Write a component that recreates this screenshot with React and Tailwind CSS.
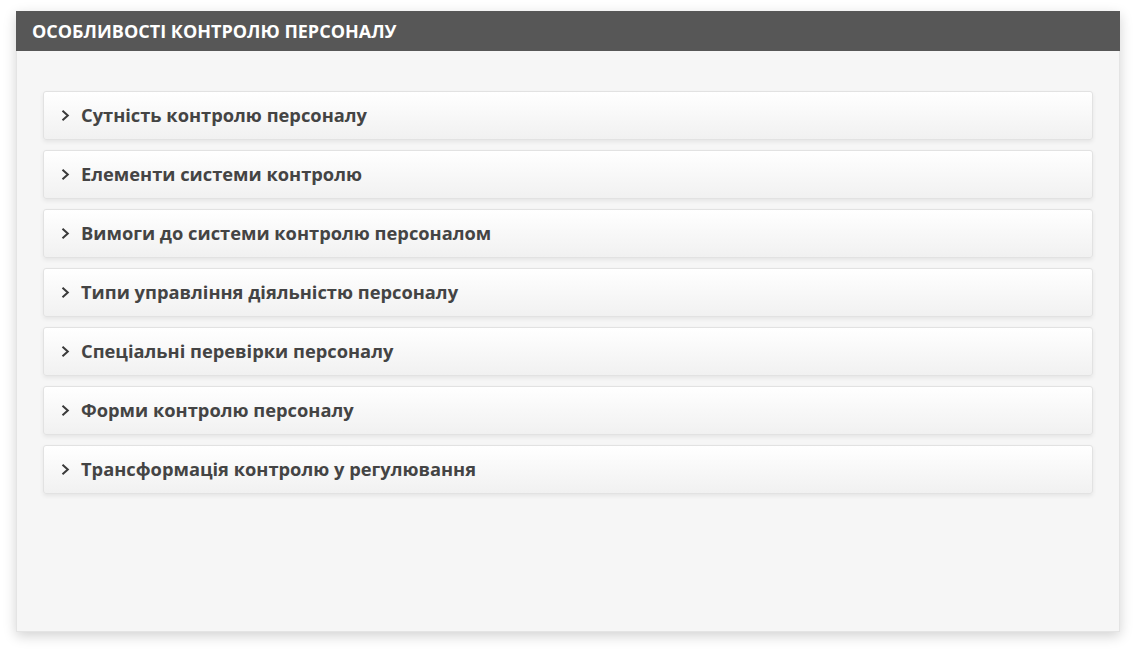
import React from "react";

const items = [
  "Сутність контролю персоналу",
  "Елементи системи контролю",
  "Вимоги до системи контролю персоналом",
  "Типи управління діяльністю персоналу",
  "Спеціальні перевірки персоналу",
  "Форми контролю персоналу",
  "Трансформація контролю у регулювання",
];

export default function App() {
  return (
    <div
      className="w-[1136px] h-[653px] bg-white pt-[11px] pl-[16px]"
      style={{ fontFamily: '"Open Sans", "Noto Sans", sans-serif' }}
    >
      <div className="w-[1104px] h-[621px] bg-[#f6f6f6] shadow-[0_4px_12px_rgba(0,0,0,0.18)] border border-[#e4e4e4] flex flex-col">
        <div className="h-[40px] bg-[#575757] flex items-center px-[16px] -mx-px -mt-px">
          <span className="text-white font-bold text-[18px]">
            ОСОБЛИВОСТІ КОНТРОЛЮ ПЕРСОНАЛУ
          </span>
        </div>
        <div className="pt-[40px] px-[26px] flex flex-col gap-[10px]">
          {items.map((t) => (
            <div
              key={t}
              className="h-[49px] rounded-[3px] border border-[#e2e2e2] bg-gradient-to-b from-[#ffffff] to-[#f1f1f1] shadow-[0_2px_4px_rgba(0,0,0,0.07)] flex items-center pl-[16px]"
            >
              <svg width="11" height="13" viewBox="0 0 11 13" className="mr-[10px]">
                <path d="M2.5 1.8 L7.8 6.5 L2.5 11.2" fill="none" stroke="#3a3a3a" strokeWidth="2" />
              </svg>
              <span className="text-[18.3px] font-bold text-[#444] leading-none">{t}</span>
            </div>
          ))}
        </div>
      </div>
    </div>
  );
}
